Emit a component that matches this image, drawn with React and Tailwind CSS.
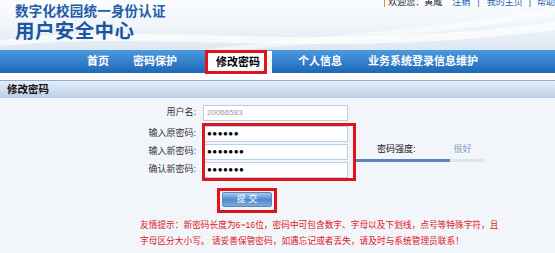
import React from 'react';

const font = { fontFamily: '"Liberation Sans", "Noto Sans CJK SC", sans-serif' };

function Field({ label, children }) {
  return (
    <div className="flex items-center h-[16px]">
      <span className="w-[200px] pr-[4px] text-right text-[9px] text-[#333]">{label}</span>
      <div className="ml-[3px] w-[145px] h-[16px] bg-white border border-[#b7d2e6] flex items-center px-[3px]">
        {children}
      </div>
    </div>
  );
}

function Dots({ n }) {
  return <span className="text-[8px] font-bold text-black tracking-[0.5px] leading-none">{'●'.repeat(n)}</span>;
}

export default function App() {
  return (
    <div className="w-[555px] h-[253px] overflow-hidden bg-[#f2f6fb]" style={font}>
      {/* Header */}
      <div className="relative h-[50px] bg-gradient-to-b from-[#fbfdff] via-[#f1f5fa] to-[#dde7f2] flex overflow-hidden">
        <svg className="absolute inset-0" width="555" height="50" viewBox="0 0 555 50">
          <path d="M0 40 C 150 20, 300 55, 555 22 L555 30 C 320 60, 160 30, 0 46 Z" fill="#ffffff" opacity="0.7" />
          <path d="M200 50 C 320 35, 430 30, 555 8 L555 14 C 440 36, 330 42, 240 50 Z" fill="#ffffff" opacity="0.5" />
        </svg>
        <div className="relative w-[384px] shrink-0 pl-[15px] pt-[5px]">
          <div className="text-[13.5px] leading-[14px] font-bold text-[#1f5ca8] tracking-[0.2px]">数字化校园统一身份认证</div>
          <div className="text-[19.5px] leading-[22px] font-bold text-[#1a56a3] mt-[1px] tracking-[0.4px]">用户安全中心</div>
        </div>
        <div className="relative flex-1 flex items-start -mt-[4px] text-[9px] leading-[12px] whitespace-nowrap overflow-hidden">
          <span className="inline-block w-[8px] h-[8px] mt-[3px] mr-[3px] rounded-full bg-[#c99a2e]" />
          <span className="text-[#222]">欢迎您：黄威</span>
          <span className="ml-[10px] text-[#2a64b0]">注销</span>
          <span className="mx-[7px] text-[#2a64b0]">|</span>
          <span className="text-[#2a64b0]">我的主页</span>
          <span className="mx-[6px] text-[#2a64b0]">|</span>
          <span className="text-[#2a64b0]">帮助</span>
        </div>
      </div>

      {/* Nav */}
      <div className="h-[23px] bg-gradient-to-b from-[#4b9ae0] to-[#1d68b6] flex items-end pl-[87px] text-[11px] font-bold text-white whitespace-nowrap">
        <span className="h-[23px] leading-[23px]">首页</span>
        <span className="h-[23px] leading-[23px] ml-[24px]">密码保护</span>
        <div className="relative ml-[31px] w-[64px] h-[22px] bg-white text-black leading-[22px] pl-[8px]">
          修改密码
          <div className="absolute -left-[3px] -top-[1px] w-[62px] h-[24px] border-[3px] border-[#e0141b]" />
        </div>
        <span className="h-[23px] leading-[23px] ml-[26px]">个人信息</span>
        <span className="h-[23px] leading-[23px] ml-[26px]">业务系统登录信息维护</span>
      </div>

      <div className="h-[7px] bg-white" />

      {/* Section bar */}
      <div className="h-[18px] bg-gradient-to-b from-[#e6eef8] to-[#b9cee6] border-t border-[#8eabd0] pl-[7px] text-[10.5px] font-bold text-[#111] leading-[17px]">
        修改密码
      </div>

      {/* Form */}
      <div className="flex">
        <div className="flex flex-col">
          <div className="mt-[7px]">
            <Field label="用户名:">
              <span className="text-[8px] text-[#999]">20066583</span>
            </Field>
          </div>
          <div className="relative mt-[5px] flex flex-col gap-[2px]">
            <Field label="输入原密码:"><Dots n={6} /></Field>
            <Field label="输入新密码:"><Dots n={7} /></Field>
            <Field label="确认新密码:"><Dots n={7} /></Field>
            <div className="absolute left-[202px] -top-[3px] w-[154px] h-[58px] border-[3px] border-[#e0141b]" />
          </div>
          <div className="mt-[14px] ml-[222px] relative w-[50px] h-[15px] rounded-[2px] bg-gradient-to-b from-[#a9c9ec] via-[#4f8bd0] to-[#7ea9dc] border border-[#5a86bd] text-white text-[9px] leading-[13px] text-center">
            提 交
            <div className="absolute -left-[6px] -top-[5px] w-[60px] h-[25px] border-[3px] border-[#e0141b]" />
          </div>
        </div>
        <div className="ml-[6px] mt-[45px] w-[130px]">
          <div className="flex text-[9px] leading-[12px]">
            <span className="ml-[23px] text-[#111]">密码强度:</span>
            <span className="ml-[38px] text-[#7d9cc4]">很好</span>
          </div>
          <div className="mt-[4px] h-[3px] flex">
            <div className="w-[96px] bg-[#5b86bd]" />
            <div className="flex-1 bg-[#dfe4ea]" />
          </div>
        </div>
      </div>

      <div className="mt-[10px] pl-[140px] text-[8.7px] leading-[16px] text-[#e0141b] whitespace-nowrap">
        <div>友情提示：新密码长度为6~16位，密码中可包含数字、字母以及下划线，点号等特殊字符，且</div>
        <div>字母区分大小写。 请妥善保管密码，如遇忘记或者丢失，请及时与系统管理员联系！</div>
      </div>
    </div>
  );
}
